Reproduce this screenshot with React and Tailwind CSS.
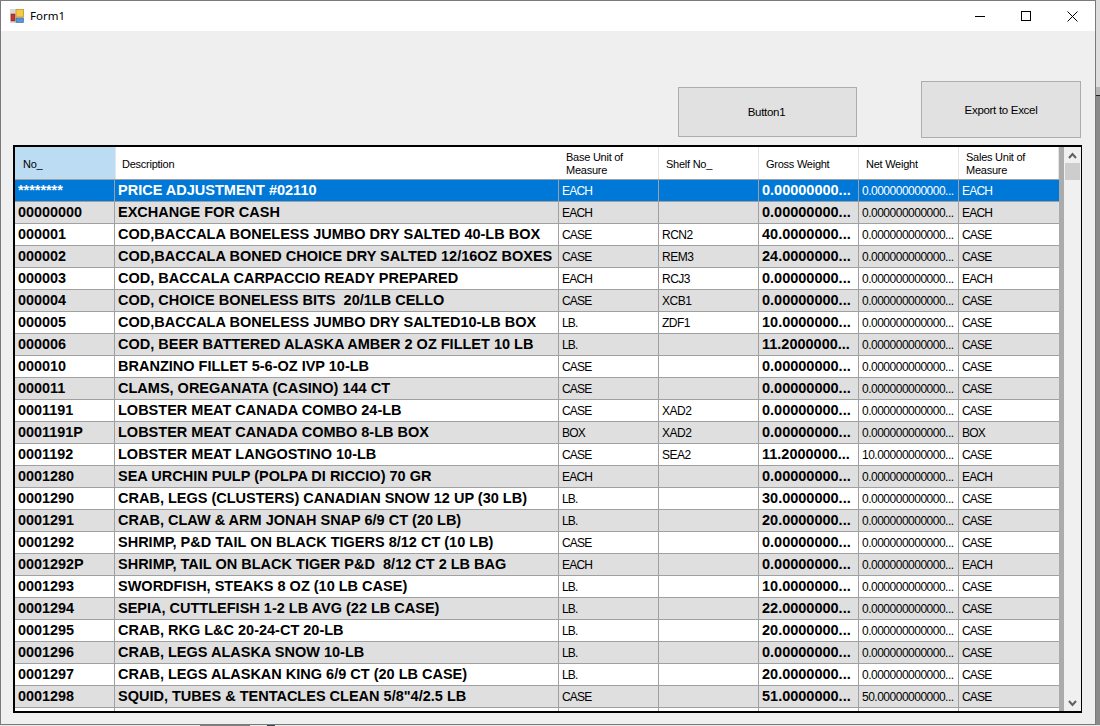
const rows = [
  ['********', 'PRICE ADJUSTMENT #02110', 'EACH', '', '0.00000000...', '0.000000000000...', 'EACH'],
  ['00000000', 'EXCHANGE FOR CASH', 'EACH', '', '0.00000000...', '0.000000000000...', 'EACH'],
  ['000001', 'COD,BACCALA BONELESS JUMBO DRY SALTED 40-LB BOX', 'CASE', 'RCN2', '40.0000000...', '0.000000000000...', 'CASE'],
  ['000002', 'COD,BACCALA BONED CHOICE DRY SALTED 12/16OZ BOXES', 'CASE', 'REM3', '24.0000000...', '0.000000000000...', 'CASE'],
  ['000003', 'COD, BACCALA CARPACCIO READY PREPARED', 'EACH', 'RCJ3', '0.00000000...', '0.000000000000...', 'EACH'],
  ['000004', 'COD, CHOICE BONELESS BITS  20/1LB CELLO', 'CASE', 'XCB1', '0.00000000...', '0.000000000000...', 'CASE'],
  ['000005', 'COD,BACCALA BONELESS JUMBO DRY SALTED10-LB BOX', 'LB.', 'ZDF1', '10.0000000...', '0.000000000000...', 'CASE'],
  ['000006', 'COD, BEER BATTERED ALASKA AMBER 2 OZ FILLET 10 LB', 'LB.', '', '11.2000000...', '0.000000000000...', 'CASE'],
  ['000010', 'BRANZINO FILLET 5-6-OZ IVP 10-LB', 'CASE', '', '0.00000000...', '0.000000000000...', 'CASE'],
  ['000011', 'CLAMS, OREGANATA (CASINO) 144 CT', 'CASE', '', '0.00000000...', '0.000000000000...', 'CASE'],
  ['0001191', 'LOBSTER MEAT CANADA COMBO 24-LB', 'CASE', 'XAD2', '0.00000000...', '0.000000000000...', 'CASE'],
  ['0001191P', 'LOBSTER MEAT CANADA COMBO 8-LB BOX', 'BOX', 'XAD2', '0.00000000...', '0.000000000000...', 'BOX'],
  ['0001192', 'LOBSTER MEAT LANGOSTINO 10-LB', 'CASE', 'SEA2', '11.2000000...', '10.00000000000...', 'CASE'],
  ['0001280', 'SEA URCHIN PULP (POLPA DI RICCIO) 70 GR', 'EACH', '', '0.00000000...', '0.000000000000...', 'EACH'],
  ['0001290', 'CRAB, LEGS (CLUSTERS) CANADIAN SNOW 12 UP (30 LB)', 'LB.', '', '30.0000000...', '0.000000000000...', 'CASE'],
  ['0001291', 'CRAB, CLAW & ARM JONAH SNAP 6/9 CT (20 LB)', 'LB.', '', '20.0000000...', '0.000000000000...', 'CASE'],
  ['0001292', 'SHRIMP, P&D TAIL ON BLACK TIGERS 8/12 CT (10 LB)', 'CASE', '', '0.00000000...', '0.000000000000...', 'CASE'],
  ['0001292P', 'SHRIMP, TAIL ON BLACK TIGER P&D  8/12 CT 2 LB BAG', 'EACH', '', '0.00000000...', '0.000000000000...', 'EACH'],
  ['0001293', 'SWORDFISH, STEAKS 8 OZ (10 LB CASE)', 'LB.', '', '10.0000000...', '0.000000000000...', 'CASE'],
  ['0001294', 'SEPIA, CUTTLEFISH 1-2 LB AVG (22 LB CASE)', 'LB.', '', '22.0000000...', '0.000000000000...', 'CASE'],
  ['0001295', 'CRAB, RKG L&C 20-24-CT 20-LB', 'LB.', '', '20.0000000...', '0.000000000000...', 'CASE'],
  ['0001296', 'CRAB, LEGS ALASKA SNOW 10-LB', 'LB.', '', '0.00000000...', '0.000000000000...', 'CASE'],
  ['0001297', 'CRAB, LEGS ALASKAN KING 6/9 CT (20 LB CASE)', 'LB.', '', '20.0000000...', '0.000000000000...', 'CASE'],
  ['0001298', 'SQUID, TUBES & TENTACLES CLEAN 5/8"4/2.5 LB', 'CASE', '', '51.0000000...', '50.00000000000...', 'CASE'],
];

const headers = ['Base Unit of Measure', 'Shelf No_', 'Gross Weight', 'Net Weight', 'Sales Unit of Measure'];

function HeaderCell({ children }) {
  return (
    <div className="flex w-[100px] items-center border-r border-[#e4e4e4] pl-[7px] pr-2 pt-[2px] leading-[13px]">
      {children}
    </div>
  );
}

function Row({ row, index }) {
  const [no, desc, base, shelf, gross, net, sales] = row;
  const selected = index === 0;
  const bg = selected ? 'bg-[#0078d7] text-white' : index % 2 === 1 ? 'bg-[#dfdfdf] text-black' : 'bg-white text-black';
  const cell = 'flex items-center overflow-hidden whitespace-pre border-r border-[#a0a0a0] pl-[3px]';
  const bold = 'pt-px text-[14.5px] font-bold';
  const plain = 'pt-px text-[12px] tracking-[-0.5px]';
  const unit = 'pt-px text-[12px] tracking-[-0.8px]';
  return (
    <div className={`flex h-[22px] shrink-0 border-b border-[#a0a0a0] ${bg}`}>
      <div className={`${cell} w-[100px] pl-[2px] pt-px text-[14.4px] font-bold`}>{no}</div>
      <div className={`${cell} ${bold} w-[444px]`}>{desc}</div>
      <div className={`${cell} ${unit} w-[100px]`}>{base}</div>
      <div className={`${cell} ${plain} w-[100px]`}>{shelf}</div>
      <div className={`${cell} ${bold} w-[100px]`}>{gross}</div>
      <div className={`${cell} ${plain} w-[100px]`}>{net}</div>
      <div className={`${cell} ${unit} w-[100px] border-r-0`}>{sales}</div>
    </div>
  );
}

function AppIcon() {
  return (
    <svg width="14" height="14" viewBox="0 0 14 14">
      <rect x="0" y="0" width="14" height="14" fill="#d8d8d8" />
      <rect x="1" y="5" width="4" height="7" fill="#c0392b" stroke="#7a1f16" strokeWidth="0.5" />
      <rect x="6" y="0.5" width="7.5" height="7.5" fill="#f7c948" stroke="#b8860b" strokeWidth="0.6" />
      <rect x="6" y="9" width="7.5" height="4.5" fill="#5b93d8" stroke="#2f5f9e" strokeWidth="0.5" />
    </svg>
  );
}

function Chevron({ up }) {
  return (
    <svg width="9" height="7" viewBox="0 0 9 7" fill="none" stroke="#606060" strokeWidth="2">
      <path d={up ? 'M1 6 L4.5 2 L8 6' : 'M1 1 L4.5 5 L8 1'} />
    </svg>
  );
}

export default function App() {
  return (
    <div className="flex h-[726px] w-[1100px] flex-col overflow-hidden bg-[#8a8a8a] font-['Liberation_Sans',Arial,sans-serif] text-black">
      <div className="flex h-[725px] shrink-0">
        <div className="flex h-[725px] w-[1096px] shrink-0 flex-col border border-[#7a7a7a]">
          <div className="flex h-[30px] shrink-0 items-center bg-white pl-[9px]">
            <AppIcon />
            <span className="ml-[6px] font-['Noto_Sans',sans-serif] text-[11.5px]">Form1</span>
            <div className="ml-auto flex h-full">
              <div className="flex w-[46px] items-center justify-center">
                <div className="h-px w-[10px] bg-black" />
              </div>
              <div className="flex w-[46px] items-center justify-center">
                <div className="h-[10px] w-[10px] border border-black" />
              </div>
              <div className="flex w-[46px] items-center justify-center">
                <svg width="11" height="11" viewBox="0 0 11 11" stroke="black" strokeWidth="1">
                  <path d="M0.5 0.5 L10.5 10.5 M10.5 0.5 L0.5 10.5" />
                </svg>
              </div>
            </div>
          </div>

          <div className="flex-1 bg-[#efefef] pl-3">
            <div className="flex h-[114px] items-start text-[11.5px] tracking-[-0.3px]">
              <button className="ml-[665px] mt-[56px] h-[50px] w-[179px] border border-[#adadad] bg-[#e1e1e1] pr-[2px] pt-px">Button1</button>
              <button className="ml-[64px] mt-[50px] h-[57px] w-[160px] border border-[#adadad] bg-[#e1e1e1] pt-[3px]">Export to Excel</button>
            </div>

            <div className="flex h-[568px] w-[1069px] border-b-2 border-l-2 border-r border-t-2 border-black">
              <div className="flex flex-1 flex-col overflow-hidden bg-[#ababab]">
                <div className="flex h-[33px] w-[1044px] shrink-0 border-b border-[#a0a0a0] bg-white text-[11px] tracking-[-0.25px]">
                  <div className="flex w-[100px] items-center bg-[#bcdcf4] pl-2 pt-[2px]">No_</div>
                  <div className="flex w-[444px] items-center border-l border-[#e4e4e4] pl-[6px] pt-[2px]">Description</div>
                  {headers.map((h) => (
                    <HeaderCell key={h}>{h}</HeaderCell>
                  ))}
                </div>
                <div className="flex w-[1044px] flex-col">
                  {rows.map((r, i) => (
                    <Row key={r[0]} row={r} index={i} />
                  ))}
                  <div className="flex h-[22px] shrink-0 bg-white">
                    <div className="w-[100px] border-r border-[#a0a0a0]" />
                    <div className="w-[444px] border-r border-[#a0a0a0]" />
                    <div className="w-[100px] border-r border-[#a0a0a0]" />
                    <div className="w-[100px] border-r border-[#a0a0a0]" />
                    <div className="w-[100px] border-r border-[#a0a0a0]" />
                    <div className="w-[100px] border-r border-[#a0a0a0]" />
                    <div className="w-[100px]" />
                  </div>
                </div>
              </div>
              <div className="flex w-[17px] shrink-0 flex-col items-center bg-[#f0f0f0]">
                <div className="flex h-4 items-center justify-center">
                  <Chevron up />
                </div>
                <div className="h-[17px] w-[15px] bg-[#cdcdcd]" />
                <div className="mt-auto flex h-4 items-center justify-center">
                  <Chevron />
                </div>
              </div>
            </div>
          </div>
        </div>
        <div className="flex flex-1 flex-col">
          <div className="h-[87px] bg-[#dedede]" />
          <div className="h-[8px] bg-[#b5b5b5]" />
          <div className="h-px bg-[#222222]" />
          <div className="flex-1 bg-[#8a8a8a]" />
        </div>
      </div>
      <div className="flex h-px shrink-0 bg-[#e8e8e8]">
        <div className="ml-[200px] w-[50px] bg-[#808080]" />
        <div className="ml-[17px] w-2 bg-[#3c4658]" />
      </div>
    </div>
  );
}
